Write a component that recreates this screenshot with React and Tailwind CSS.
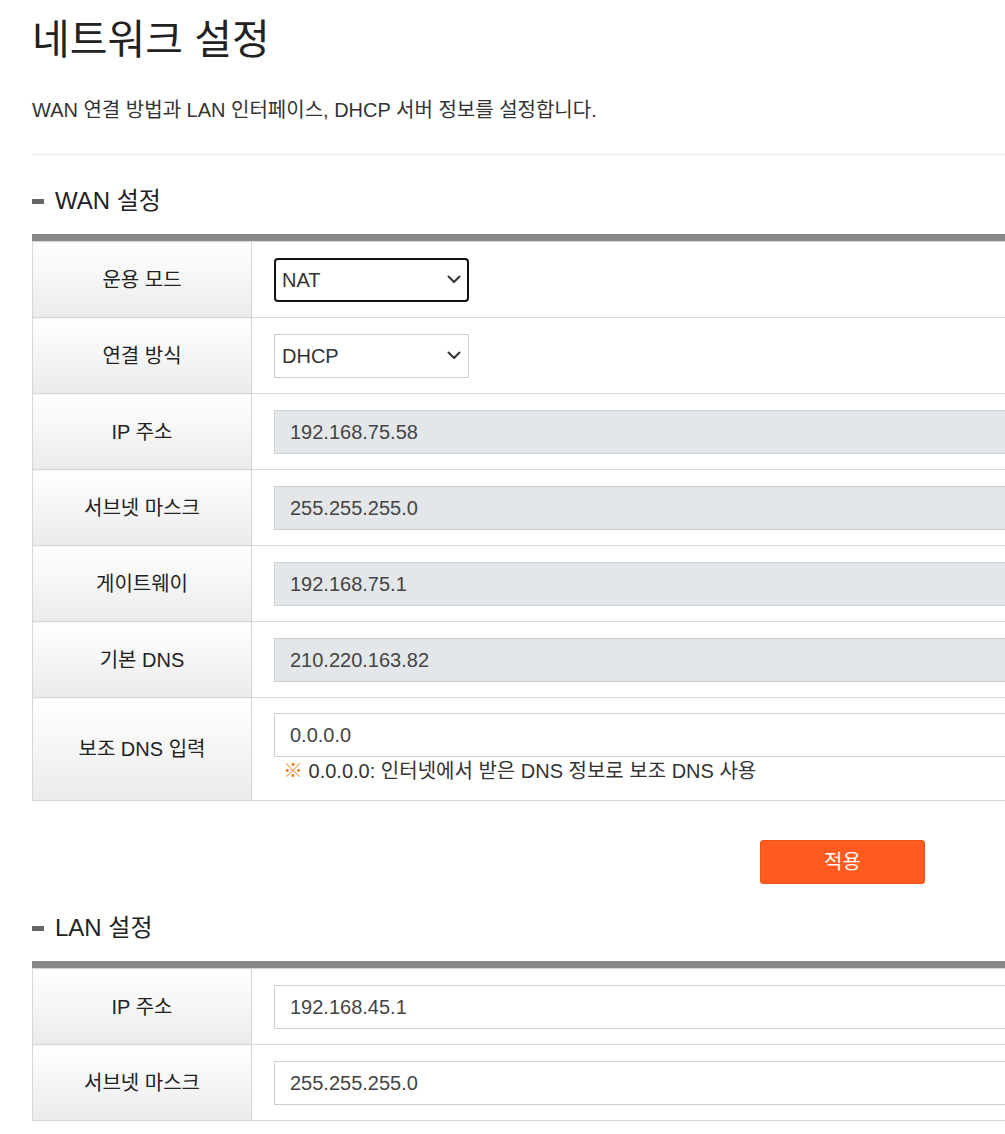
import React from "react";

const font = { fontFamily: '"Liberation Sans", "Noto Sans CJK KR", sans-serif' };

function Chevron() {
  return (
    <svg width="14" height="9" viewBox="0 0 14 9" fill="none">
      <path d="M1.5 1.5L7 7L12.5 1.5" stroke="#333" strokeWidth="2" strokeLinecap="round" strokeLinejoin="round" />
    </svg>
  );
}

function Label({ children }) {
  return (
    <th className="w-[219px] border border-[#d7d7d7] bg-gradient-to-b from-white to-[#ebebeb] text-center align-middle text-[20px] font-normal text-[#222]">
      {children}
    </th>
  );
}

function Cell({ children }) {
  return <td className="border border-[#d7d7d7] px-[22px] align-middle">{children}</td>;
}

function Select({ value, focused }) {
  return (
    <div
      className={
        focused
          ? "flex h-[44px] w-[195px] items-center justify-between rounded-[4px] border-2 border-[#111] pl-[6px] pr-[6px] text-[20px] text-[#333]"
          : "flex h-[44px] w-[195px] items-center justify-between border border-[#cfcfcf] pl-[7px] pr-[7px] text-[20px] text-[#333]"
      }
    >
      <span>{value}</span>
      <Chevron />
    </div>
  );
}

function Field({ value, disabled }) {
  return (
    <div
      className={
        "flex h-[44px] w-full items-center border border-[#cfcfcf] pl-[15px] text-[20px] text-[#444] " +
        (disabled ? "bg-[#e4e7ea]" : "bg-white")
      }
    >
      {value}
    </div>
  );
}

function SectionTitle({ children }) {
  return (
    <div className="flex h-[32px] items-center gap-[11px] text-[24px] text-[#222]">
      <span className="block h-[5px] w-[12px] bg-[#666]" />
      <span>{children}</span>
    </div>
  );
}

function TableTop() {
  return <div className="mt-[17px] h-[7px] bg-[#888]" />;
}

export default function App() {
  return (
    <div className="w-full overflow-hidden bg-white" style={font}>
      <div className="w-[1653px] pl-[32px]">
        <h1 className="pt-[14px] text-[41px] leading-[52px] font-normal text-[#222]">네트워크 설정</h1>
        <p className="mt-[31px] text-[20px] leading-[26px] text-[#333]">
          WAN 연결 방법과 LAN 인터페이스, DHCP 서버 정보를 설정합니다.
        </p>
        <div className="mt-[31px] h-px bg-[#eaeaea]" />

        <div className="mt-[30px]">
          <SectionTitle>WAN 설정</SectionTitle>
        </div>
        <TableTop />
        <table className="w-full border-collapse">
          <tbody>
            <tr className="h-[76px]">
              <Label>운용 모드</Label>
              <Cell>
                <Select value="NAT" focused />
              </Cell>
            </tr>
            <tr className="h-[76px]">
              <Label>연결 방식</Label>
              <Cell>
                <Select value="DHCP" />
              </Cell>
            </tr>
            <tr className="h-[76px]">
              <Label>IP 주소</Label>
              <Cell>
                <Field value="192.168.75.58" disabled />
              </Cell>
            </tr>
            <tr className="h-[76px]">
              <Label>서브넷 마스크</Label>
              <Cell>
                <Field value="255.255.255.0" disabled />
              </Cell>
            </tr>
            <tr className="h-[76px]">
              <Label>게이트웨이</Label>
              <Cell>
                <Field value="192.168.75.1" disabled />
              </Cell>
            </tr>
            <tr className="h-[76px]">
              <Label>기본 DNS</Label>
              <Cell>
                <Field value="210.220.163.82" disabled />
              </Cell>
            </tr>
            <tr className="h-[103px]">
              <Label>보조 DNS 입력</Label>
              <td className="border border-[#d7d7d7] px-[22px] pt-[15px] pb-[16px] align-top">
                <Field value="0.0.0.0" />
                <p className="mt-[2px] pl-[9px] text-[20px] leading-[24px] text-[#333]">
                  <span className="text-[#e3861a]">※</span> 0.0.0.0: 인터넷에서 받은 DNS 정보로 보조 DNS 사용
                </p>
              </td>
            </tr>
          </tbody>
        </table>

        <div className="mt-[39px] flex justify-center">
          <button className="h-[44px] w-[165px] rounded-[3px] border border-[#e8521c] bg-[#ff5a1f] text-[20px] text-white">
            적용
          </button>
        </div>

        <div className="mt-[28px]">
          <SectionTitle>LAN 설정</SectionTitle>
        </div>
        <TableTop />
        <table className="w-full border-collapse">
          <tbody>
            <tr className="h-[76px]">
              <Label>IP 주소</Label>
              <Cell>
                <Field value="192.168.45.1" />
              </Cell>
            </tr>
            <tr className="h-[76px]">
              <Label>서브넷 마스크</Label>
              <Cell>
                <Field value="255.255.255.0" />
              </Cell>
            </tr>
          </tbody>
        </table>
        <div className="h-[40px]" />
      </div>
    </div>
  );
}
